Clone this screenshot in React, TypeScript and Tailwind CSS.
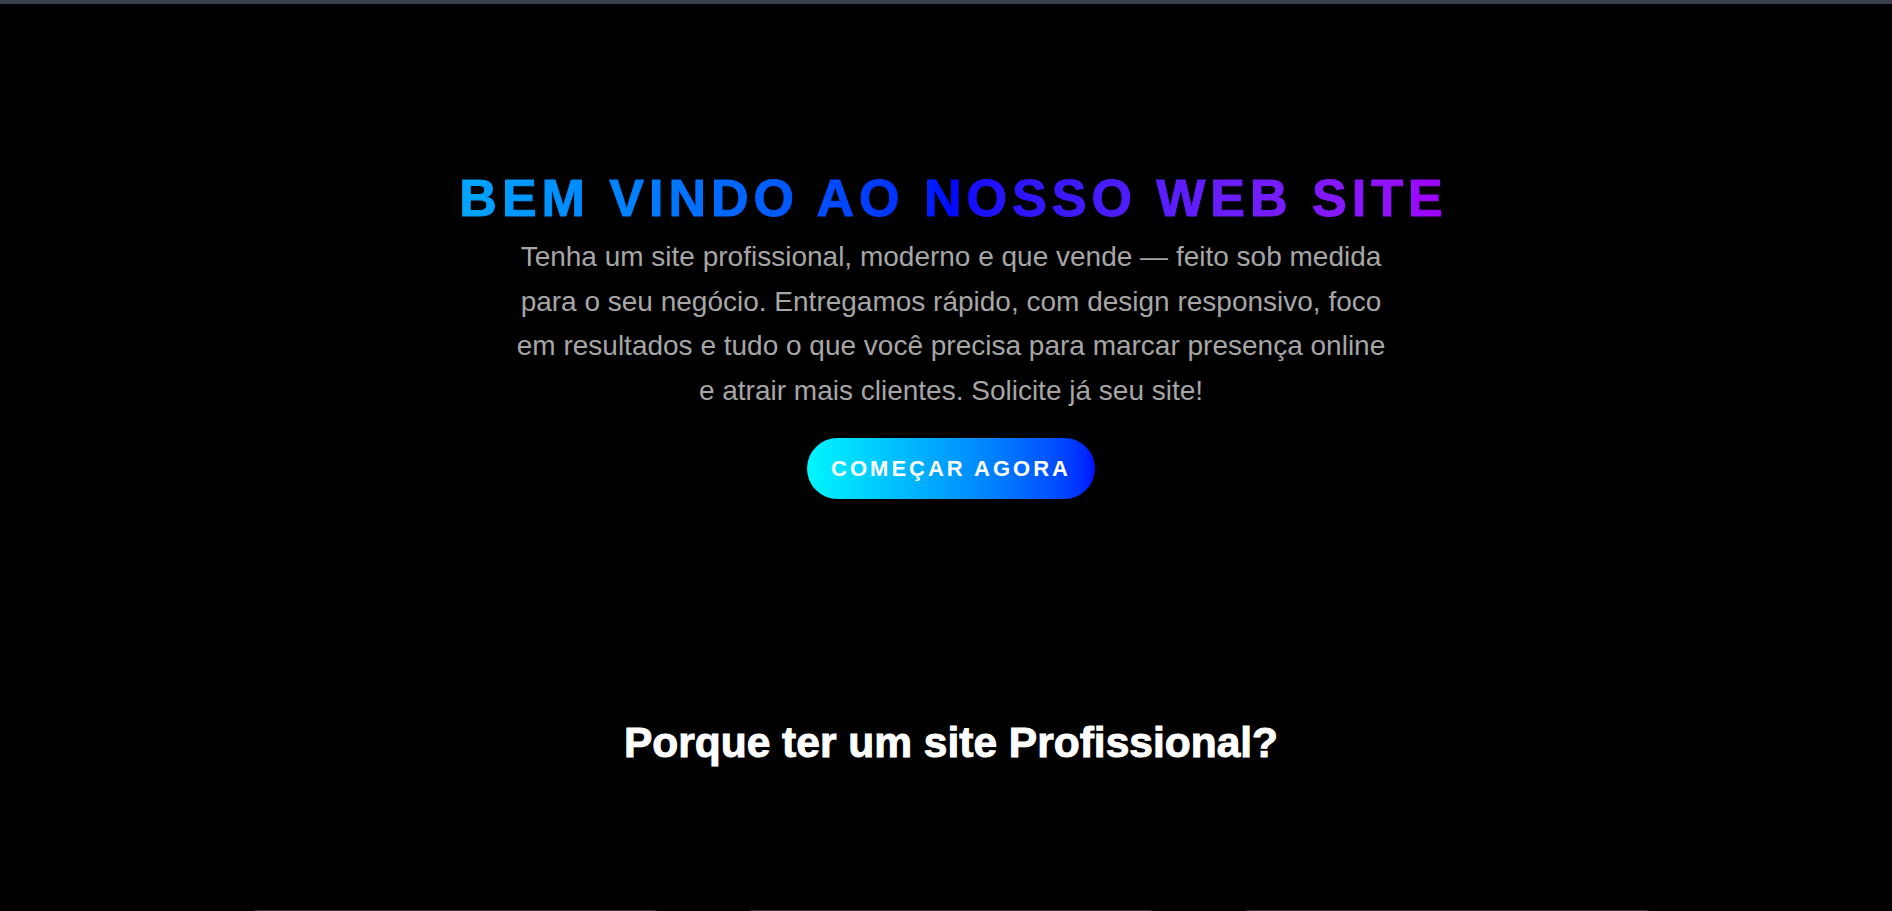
const App = (): JSX.Element => {
  return (
    <div className="min-h-screen bg-black pl-[10px] font-['Liberation_Sans',Arial,sans-serif] overflow-hidden">
      <div className="-ml-[10px] h-[4px] bg-[#3b404c]" />
      <section className="flex flex-col items-center pt-[165px] text-center">
        <h1 className="pl-[5px] text-[52px] font-bold tracking-[5px] leading-[1.15] bg-gradient-to-r from-[#00a6ff] via-[#0008ff] to-[#a000ff] bg-clip-text text-transparent [-webkit-text-stroke:1px_transparent]">
          BEM VINDO AO NOSSO WEB SITE
        </h1>
        <p className="mt-[6px] max-w-[885px] text-[28px] leading-[1.6] text-[#a6a6a6]">
          Tenha um site profissional, moderno e que vende — feito sob medida para o seu negócio. Entregamos rápido, com design
          responsivo, foco em resultados e tudo o que você precisa para marcar presença online e atrair mais clientes. Solicite já
          seu site!
        </p>
        <button className="mt-[24px] h-[61px] w-[288px] rounded-full bg-gradient-to-r from-[#00f6ff] to-[#0010ff] text-[22px] font-bold tracking-[3px] text-white">
          COMEÇAR AGORA
        </button>
      </section>
      <section className="flex flex-col items-center pt-[220px]">
        <h2 className="text-[42.5px] font-bold leading-[1.15] text-white [-webkit-text-stroke:1px_white]">
          Porque ter um site Profissional?
        </h2>
        <div className="mt-[142px] grid w-[1420px] grid-cols-3 gap-[68px]">
          <div className="h-[300px] rounded-[16px] border border-[#3a3a3a] bg-[#111]" />
          <div className="h-[300px] rounded-[16px] border border-[#3a3a3a] bg-[#111]" />
          <div className="h-[300px] rounded-[16px] border border-[#3a3a3a] bg-[#111]" />
        </div>
      </section>
    </div>
  );
};

export default App;
